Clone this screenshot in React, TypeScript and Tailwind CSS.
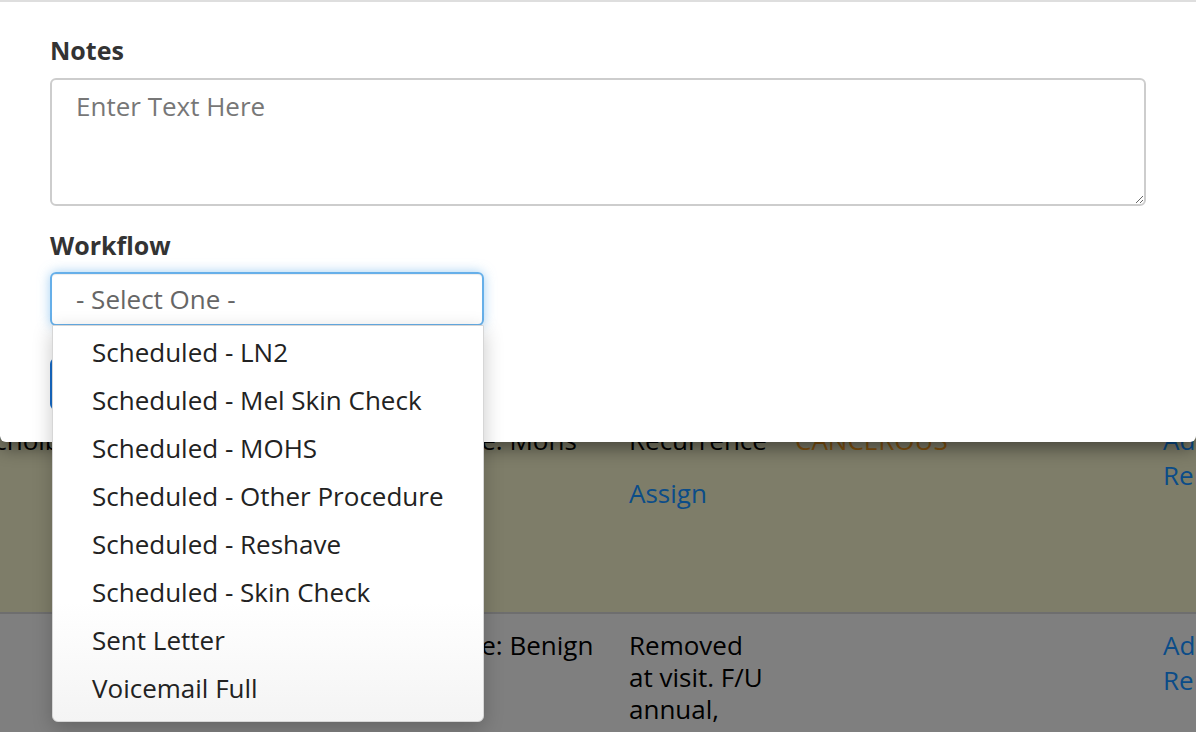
import React from "react";

const items = [
  "Scheduled - LN2",
  "Scheduled - Mel Skin Check",
  "Scheduled - MOHS",
  "Scheduled - Other Procedure",
  "Scheduled - Reshave",
  "Scheduled - Skin Check",
  "Sent Letter",
  "Voicemail Full",
];

export default function App() {
  return (
    <div className="relative w-[1196px] h-[732px] overflow-hidden bg-[#7f7f7f] font-['Open_Sans',sans-serif] text-[26px] leading-[32px] text-black">
      {/* dimmed page behind the modal */}
      <div className="pt-[409px] ml-[-20px]">
        <div className="flex h-[205px] bg-[#7e7d69] border-b-2 border-[#6e6e6e]">
          <div className="w-[458px] shrink-0 pt-[15px] whitespace-nowrap">Schoiber</div>
          <div className="w-[191px] shrink-0 pt-[15px] whitespace-nowrap">Type: Mohs</div>
          <div className="w-[166px] shrink-0 pt-[15px] pr-[28px]">
            <div>Recurrence</div>
            <div className="mt-[21px] text-[#0b4c88]">Assign</div>
          </div>
          <div className="w-[368px] shrink-0 pt-[15px] text-[#84530f]">CANCEROUS</div>
          <div className="w-[200px] shrink-0 pt-[14px] leading-[35px] text-[#0b4c88] whitespace-nowrap">
            <div>Add</div>
            <div>Remove</div>
          </div>
        </div>
        <div className="flex h-[200px] bg-[#7f7f7f]">
          <div className="w-[458px] shrink-0 pt-[15px]"></div>
          <div className="w-[191px] shrink-0 pt-[15px] whitespace-nowrap">Type: Benign</div>
          <div className="w-[166px] shrink-0 pt-[15px] pr-[28px]">Removed at visit. F/U annual, skin check.</div>
          <div className="w-[368px] shrink-0 pt-[15px]"></div>
          <div className="w-[200px] shrink-0 pt-[14px] leading-[35px] text-[#0b4c88] whitespace-nowrap">
            <div>Add</div>
            <div>Remove</div>
          </div>
        </div>
      </div>

      {/* modal */}
      <div className="absolute left-0 right-0 top-0 bg-white border-t-2 border-[#dedede] rounded-b-[6px] shadow-[0_6px_18px_rgba(0,0,0,0.45)] px-[50px] pt-[30px] pb-[32px]">
        <div className="font-bold text-[25px] text-[#333] leading-[36px] mb-[10px]">Notes</div>
        <textarea
          placeholder="Enter Text Here"
          className="block w-full h-[128px] border-2 border-[#cdcdcd] rounded-[6px] px-[24px] pt-[8px] leading-[36px] text-[#333] placeholder:text-[#777] outline-none"
        />
        <div className="font-bold text-[25px] text-[#333] leading-[36px] mt-[21px] mb-[9px]">Workflow</div>
        <div className="relative w-[434px]">
          <div className="h-[54px] border-2 border-[#66afe9] rounded-[6px] px-[24px] pt-[7px] leading-[36px] text-[#666] shadow-[inset_0_1px_1px_rgba(0,0,0,0.075),0_0_12px_rgba(102,175,233,0.6)]">
            - Select One -
          </div>
          <div className="absolute left-[2px] top-[53px] w-[432px] z-10 bg-gradient-to-b from-white from-[70%] to-[#f4f4f4] border border-[#d6d6d6] rounded-b-[6px] pt-[2px] pb-[9px] shadow-[0_6px_20px_rgba(0,0,0,0.22)]">
            {items.map((t) => (
              <div key={t} className="h-[48px] flex items-center pl-[39px] text-[#222] whitespace-nowrap">
                {t}
              </div>
            ))}
          </div>
        </div>
        <div className="mt-[32px] h-[52px] w-[160px] rounded-[6px] bg-[#176cc9]"></div>
      </div>
    </div>
  );
}
